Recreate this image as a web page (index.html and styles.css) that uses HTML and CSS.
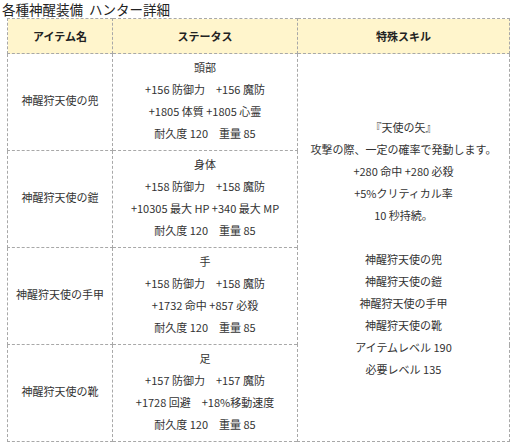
FILE: index.html
```html
<!DOCTYPE html>
<html lang="ja">
<head>
<meta charset="utf-8">
<link rel="stylesheet" href="styles.css">
</head>
<body>
<div class="title">各種神醒装備&nbsp; ハンター詳細</div>
<table class="equip">
  <colgroup>
    <col class="c1"><col class="c2"><col class="c3">
  </colgroup>
  <thead>
    <tr><th>アイテム名</th><th>ステータス</th><th>特殊スキル</th></tr>
  </thead>
  <tbody>
    <tr>
      <td>神醒狩天使の兜</td>
      <td>頭部<br>+156 防御力　+156 魔防<br>+1805 体質 +1805 心霊<br>耐久度 120　重量 85</td>
      <td rowspan="4" class="skill">『天使の矢』<br>攻撃の際、一定の確率で発動します。<br>+280 命中 +280 必殺<br>+5%クリティカル率<br>10 秒持続。<br><br>神醒狩天使の兜<br>神醒狩天使の鎧<br>神醒狩天使の手甲<br>神醒狩天使の靴<br>アイテムレベル 190<br>必要レベル 135</td>
    </tr>
    <tr>
      <td>神醒狩天使の鎧</td>
      <td>身体<br>+158 防御力　+158 魔防<br>+10305 最大 HP +340 最大 MP<br>耐久度 120　重量 85</td>
    </tr>
    <tr>
      <td>神醒狩天使の手甲</td>
      <td>手<br>+158 防御力　+158 魔防<br>+1732 命中 +857 必殺<br>耐久度 120　重量 85</td>
    </tr>
    <tr>
      <td>神醒狩天使の靴</td>
      <td>足<br>+157 防御力　+157 魔防<br>+1728 回避　+18%移動速度<br>耐久度 120　重量 85</td>
    </tr>
  </tbody>
</table>
</body>
</html>
```
FILE: styles.css
```css
html, body {
  margin: 0;
  padding: 0;
  background: #ffffff;
}
body {
  font-family: "Noto Sans CJK JP", "Noto Sans", sans-serif;
  color: #333333;
}
.title {
  font-size: 13.5px;
  line-height: 18px;
  padding: 0 0 0 2px;
  color: #222222;
  height: 18px;
}
.equip {
  margin-left: 7px;
  border-collapse: collapse;
  width: 502px;
  table-layout: fixed;
  font-size: 11px;
  line-height: 22px;
}
.c1 { width: 105px; }
.c2 { width: 185px; }
.c3 { width: 212px; }
.equip th, .equip td {
  border: 1px dashed #a8a8a8;
  text-align: center;
  vertical-align: middle;
  padding: 0;
  white-space: nowrap;
}
.equip th {
  background: #fff5cc;
  font-weight: bold;
  height: 34px;
  color: #222222;
}
.equip tbody td {
  height: 97px;
  padding-bottom: 4px;
  box-sizing: border-box;
}
.equip td.skill {
  height: auto;
  padding-bottom: 0;
}
```
